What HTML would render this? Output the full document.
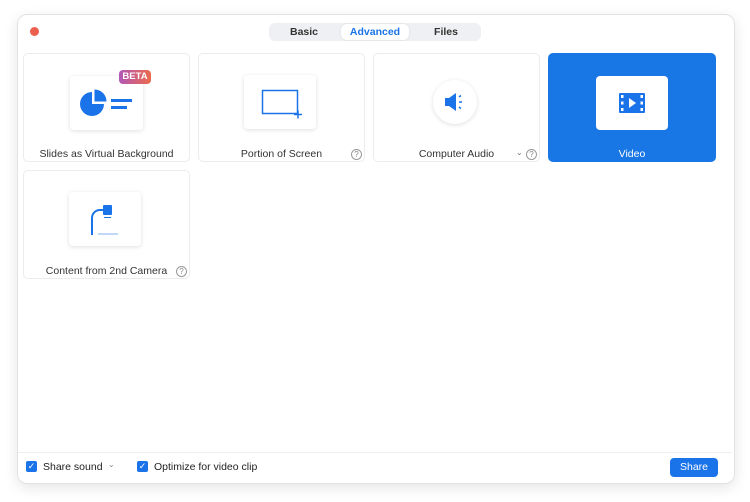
<!DOCTYPE html><html><head><style>
body{margin:0;width:750px;height:502px;background:#fff;font-family:"Liberation Sans",sans-serif;position:relative;overflow:hidden}
.win{position:absolute;left:17px;top:14px;width:716px;height:468px;background:#fff;border:1px solid #e2e2e2;border-radius:10px;box-shadow:0 4px 14px rgba(0,0,0,.10)}
.a{position:absolute}
.tile{position:absolute;width:167px;height:109px;border:1px solid #ececee;border-radius:5px;background:#fff;box-sizing:border-box}
.lab{position:absolute;left:0;right:0;top:94px;text-align:center;font-size:10.5px;color:#333;line-height:12px}
.card{position:absolute;background:#fff;border-radius:4px;box-shadow:0 1px 5px rgba(0,0,0,.13)}
.q{position:absolute;width:9px;height:9px;border:1px solid #999;border-radius:50%;font-size:8px;line-height:9px;text-align:center;color:#888}
.cb{position:absolute;width:11px;height:11px;background:#1a73e8;border-radius:2px;color:#fff;font-size:9px;line-height:11px;text-align:center}
</style></head><body>
<div class="win"></div>
<div class="a" style="left:30px;top:27px;width:9px;height:9px;border-radius:50%;background:#ec5f4f"></div>
<div class="a" style="left:269px;top:23px;width:212px;height:18px;background:#eef0f3;border-radius:6px"></div>
<div class="a" style="left:341px;top:24px;width:68px;height:16px;background:#fff;border-radius:6px;box-shadow:0 0 2px rgba(0,0,0,.1)"></div>
<div class="a" style="left:269px;top:26px;width:70px;text-align:center;font-size:10.5px;font-weight:bold;color:#333">Basic</div>
<div class="a" style="left:341px;top:26px;width:68px;text-align:center;font-size:10.5px;font-weight:bold;color:#1a73e8">Advanced</div>
<div class="a" style="left:411px;top:26px;width:70px;text-align:center;font-size:10.5px;font-weight:bold;color:#333">Files</div>

<div class="tile" style="left:23px;top:53px"><div class="lab">Slides as Virtual Background</div></div>
<div class="card" style="left:70px;top:76px;width:73px;height:54px">
<svg width="73" height="54" style="position:absolute;left:0;top:0"><path d="M22 16 v12 h12 a12 12 0 1 1 -12 -12z" fill="#1a73e8"/><path d="M24.5 13.5 v12 h12 a12 12 0 0 0 -12 -12z" fill="#1a73e8"/><rect x="41" y="23" width="21" height="3" fill="#1a73e8"/><rect x="41" y="30" width="16" height="3" fill="#1a73e8"/></svg></div>
<div class="a" style="left:119px;top:70px;width:32px;height:14px;border-radius:4px;background:linear-gradient(90deg,#b157b8,#ec6a4b);color:#fff;font-size:9.5px;font-weight:bold;text-align:center;line-height:14px">BETA</div>

<div class="tile" style="left:198px;top:53px"><div class="lab">Portion of Screen</div><div class="q" style="left:152px;top:95px">?</div></div>
<div class="card" style="left:244px;top:75px;width:72px;height:54px">
<svg width="72" height="54" style="position:absolute"><rect x="18.5" y="15.5" width="35" height="23" fill="none" stroke="#1a73e8" stroke-width="1.5"/><path d="M50 39.5h8M54 35.5v8" stroke="#1a73e8" stroke-width="1.5"/></svg></div>

<div class="tile" style="left:373px;top:53px"><div class="lab">Computer Audio</div><div class="a" style="left:142px;top:94px;font-size:8px;color:#777">⌄</div><div class="q" style="left:152px;top:95px">?</div></div>
<div class="card" style="left:433px;top:80px;width:44px;height:44px;border-radius:50%">
<svg width="44" height="44" style="position:absolute"><path d="M12 18h4l7-5v18l-7-5h-4z" fill="#1a73e8"/><path d="M26 17l2-1.5M26 22h3M26 27l2 1.5" stroke="#1a73e8" stroke-width="1.5"/></svg></div>

<div class="tile" style="left:548px;top:53px;width:168px;background:#1877e5;border-color:#1877e5"><div class="lab" style="color:#fff">Video</div></div>
<div class="a" style="left:596px;top:76px;width:72px;height:54px;background:#fff;border-radius:4px">
<svg width="72" height="54" style="position:absolute"><rect x="23" y="17" width="26" height="20" rx="1" fill="#1a73e8"/><g fill="#fff"><rect x="25" y="19" width="2.5" height="3"/><rect x="25" y="25.5" width="2.5" height="3"/><rect x="25" y="32" width="2.5" height="3"/><rect x="44.5" y="19" width="2.5" height="3"/><rect x="44.5" y="25.5" width="2.5" height="3"/><rect x="44.5" y="32" width="2.5" height="3"/><path d="M33 22l7 5-7 5z"/></g></svg></div>

<div class="tile" style="left:23px;top:170px"><div class="lab">Content from 2nd Camera</div><div class="q" style="left:152px;top:95px">?</div></div>
<div class="card" style="left:69px;top:192px;width:72px;height:54px">
<svg width="72" height="54" style="position:absolute"><path d="M23 43V26a8 8 0 0 1 8-8h3" fill="none" stroke="#1a73e8" stroke-width="2"/><rect x="34" y="13" width="9" height="10" rx="1" fill="#1a73e8"/><path d="M35 25.5h7" stroke="#1a73e8"/><path d="M29 42h20" stroke="#7fb0ef" stroke-width="1"/></svg></div>

<div class="a" style="left:18px;top:452px;width:714px;height:1px;background:#eee"></div>
<div class="cb" style="left:26px;top:461px">✓</div>
<div class="a" style="left:43px;top:461px;font-size:10.5px;color:#222">Share sound</div>
<div class="a" style="left:108px;top:460px;font-size:8px;color:#888">⌄</div>
<div class="cb" style="left:137px;top:461px">✓</div>
<div class="a" style="left:154px;top:461px;font-size:10.5px;color:#222">Optimize for video clip</div>
<div class="a" style="left:670px;top:458px;width:48px;height:19px;background:#1a73e8;border-radius:4px;color:#fff;font-size:10.5px;text-align:center;line-height:19px">Share</div>
</body></html>
